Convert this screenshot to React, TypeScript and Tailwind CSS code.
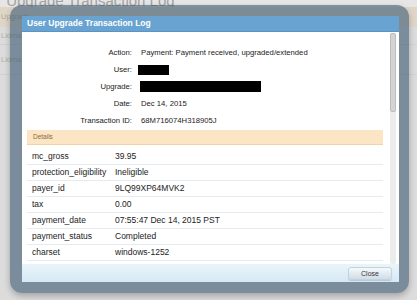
import React from "react";

const infoRows: [string, React.ReactNode][] = [
  ["Action:", "Payment: Payment received, upgraded/extended"],
  ["User:", <span className="-ml-[3px] block h-[10px] w-[31px] bg-black" />],
  ["Upgrade:", <span className="-ml-[1px] block h-[11px] w-[121px] bg-black" />],
  ["Date:", "Dec 14, 2015"],
  ["Transaction ID:", "68M716074H318905J"],
];

const details: [string, string][] = [
  ["mc_gross", "39.95"],
  ["protection_eligibility", "Ineligible"],
  ["payer_id", "9LQ99XP64MVK2"],
  ["tax", "0.00"],
  ["payment_date", "07:55:47 Dec 14, 2015 PST"],
  ["payment_status", "Completed"],
  ["charset", "windows-1252"],
];

export default function App() {
  return (
    <div
      className="relative h-[300px] w-[417px] overflow-hidden bg-[#dcdcdc]"
      style={{ fontFamily: '"Liberation Sans", Arial, sans-serif' }}
    >
      {/* page behind the overlay */}
      <div className="h-[15px] bg-[#e6e6e6]">
        <div className="-ml-[3px] -mt-[8px] whitespace-nowrap text-[15px] leading-[18px] text-[#a3a3a3]">
          r Upgrade Transaction Log
        </div>
      </div>
      <div className="flex flex-col text-[7.5px] text-[#b3aca2]">
        <div className="flex h-[20px] items-center bg-[#dfd6c8] pl-[1px]">Upgrade</div>
        <div className="flex h-[18px] items-center border-b border-[#d2d2d2] pl-[1px]">Lidmaa</div>
        <div className="flex h-[30px] items-center border-b border-[#d2d2d2] pl-[1px]">Lidmaa</div>
      </div>

      {/* overlay */}
      <div className="absolute left-[10px] top-[5px] flex h-[288px] w-[399px] flex-col rounded-[12px] bg-[rgba(58,88,113,0.6)] pb-[11px] pl-[12px] pr-[10px] pt-[11px] shadow-[0_3px_6px_rgba(0,0,0,0.25)]">
        <div className="flex h-[16px] items-center border-b border-[#5d93c0] bg-[#69a3d1] pl-[5px] text-[8.5px] font-bold text-white">
          User Upgrade Transaction Log
        </div>
        <div className="flex min-h-0 flex-1 bg-white">
          <div className="flex-1 pl-[5px] pr-[7px]">
            <div className="flex flex-col pt-[12px] text-[7.7px] text-[#222]">
              {infoRows.map(([label, value], i) => (
                <div key={i} className="flex h-[17px] items-center">
                  <div className="w-[105px] text-right">{label}</div>
                  <div className="pl-[9px]">{value}</div>
                </div>
              ))}
            </div>
            <div className="mt-[1px] flex h-[15px] items-center border-b border-[#f1d3a3] bg-[#fbe5c5] pl-[6px] text-[6.5px] text-[#8a6a3a]">
              Details
            </div>
            <div className="mt-[4px] flex flex-col text-[8.5px] text-[#222]">
              {details.map(([k, v]) => (
                <div
                  key={k}
                  className="flex h-[16px] items-center border-b border-[#e3ecf0]"
                >
                  <div className="w-[88px] pl-[5px]">{k}</div>
                  <div>{v}</div>
                </div>
              ))}
            </div>
          </div>
          <div className="flex w-[9px] flex-col pr-[3px] pt-[1px]">
            <div className="flex-1 rounded-[2px] bg-[#ececec]">
              <div className="h-[79px] rounded-[2px] border border-[#bdbdbd] bg-[#d4d4d4]" />
            </div>
          </div>
        </div>
        <div className="flex h-[18px] items-center justify-end bg-gradient-to-b from-[#eaf4fa] to-[#d6e9f5] pr-[7px]">
          <button className="h-[13px] w-[44px] rounded-[3px] border border-[#c3d2dd] bg-gradient-to-b from-[#f5f9fc] to-[#cfdde8] text-[7px] leading-none text-[#333] shadow-[0_1px_1px_rgba(0,0,0,0.15)]">
            Close
          </button>
        </div>
      </div>
    </div>
  );
}
